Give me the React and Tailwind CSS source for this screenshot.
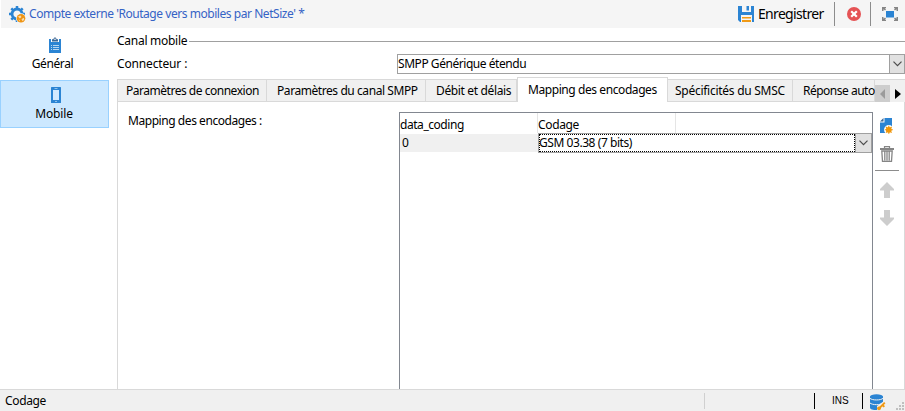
import React from 'react';

const Chevron = () => (
  <svg width="9" height="6" viewBox="0 0 9 6" fill="none" stroke="#4c4c4c" strokeWidth="1.2">
    <path d="M0.5 0.7 4.5 4.7 8.5 0.7" />
  </svg>
);

const GearIcon = () => (
  <svg width="17" height="17" viewBox="0 0 17 17">
    <circle cx="8" cy="8" r="5" fill="none" stroke="#2b84d3" strokeWidth="2.8" />
    <path d="M8 0v3M8 13v3M0 8h3M13 8h3M2.300 2.300l2 2M13.700 2.300l-2 2M2.300 13.700l2-2" stroke="#2b84d3" strokeWidth="2.500" />
    <circle cx="12" cy="12.300" r="5" fill="#f5f5f5" />
    <circle cx="12" cy="12.300" r="4.300" fill="#ee9413" />
    <path d="M9 10.500l2.500-1 1 1.600-1.600 1.300zM12.500 13.200l2.200-1.400.6 1.600-1.600 1.800zM9.300 13.500l1.500.6.2 1.500z" fill="#fbdcae" />
  </svg>
);

const SaveIcon = () => (
  <svg width="16" height="16" viewBox="0 0 16 16">
    <path d="M0 0h16v16H2l-2-2z" fill="#2b84d3" />
    <path d="M4 0h9v6H4zM3 9h11v7H3z" fill="#f5f5f5" />
    <path d="M8.5 0H11v4.5H8.5z" fill="#2b84d3" />
    <path d="M4 11h9v1.4H4zM4 14h9v2H4z" fill="#f09a16" />
  </svg>
);

const CloseIcon = () => (
  <svg width="14" height="14" viewBox="0 0 14 14">
    <circle cx="7" cy="7" r="7" fill="#e55355" />
    <path d="M4.2 4.2l5.6 5.6M9.8 4.2L4.2 9.8" stroke="#fff" strokeWidth="2.2" />
  </svg>
);

const FitIcon = () => (
  <svg width="16" height="14" viewBox="0 0 16 14">
    <path d="M4 4h8v6.500H4z" fill="#2b84d3" />
    <path d="M0 0h4v1.2H2.8L4 2.5l-1 1-1.5-1.3V4H0zM16 0h-4v1.2h1.2L12 2.5l1 1 1.5-1.3V4H16zM0 14h4v-1.2H2.8L4 11.5l-1-1-1.5 1.3V10H0zM16 14h-4v-1.2h1.2L12 11.5l1-1 1.5 1.3V10H16z" fill="#858585" />
  </svg>
);

const ClipboardIcon = () => (
  <svg width="12" height="16" viewBox="0 0 12 16">
    <path d="M0 2h12v14H0z" fill="#2b84d3" />
    <path d="M2 2h8v3H2z" fill="#fff" />
    <path d="M3 4.5V2.2h1.5C4.5 0 7.500 0 7.500 2.200H9v2.300z" fill="#3c6896" />
    <circle cx="6" cy="2.200" r="0.800" fill="#fff" />
    <path d="M2 8h1v1H2zM4 8h6v1H4zM2 10h1v1H2zM4 10h6v1H4zM2 12h1v1H2zM4 12h6v1H4z" fill="#b7d5ef" />
  </svg>
);

const PhoneIcon = () => (
  <svg width="10" height="16" viewBox="0 0 10 16">
    <rect width="10" height="16" rx="0.5" fill="#2b84d3" />
    <path d="M2 3h6v10H2z" fill="#d3eaff" />
    <path d="M3.500 1h3v1h-3zM4 14h2v1H4z" fill="#8fc0ea" />
  </svg>
);

const NewIcon = () => (
  <svg width="13" height="16" viewBox="0 0 13 16">
    <path d="M4.500 0H12v15H0V4.500h4.500z" fill="#2b84d3" />
    <path d="M3.500 0v3.500H0z" fill="#3c6896" />
    <circle cx="8.800" cy="11.800" r="4.800" fill="#fff" />
    <circle cx="8.800" cy="11.800" r="2.900" fill="#f09609" />
    <path d="M8.800 7.800v8M4.800 11.800h8M6 9l5.600 5.600M11.600 9L6 14.600" stroke="#f09609" strokeWidth="1.100" />
  </svg>
);

const TrashIcon = () => (
  <svg width="14" height="16" viewBox="0 0 14 16" fill="none" stroke="#858585">
    <path d="M0 3h14" strokeWidth="2" />
    <path d="M4.500 2.500V.600h5v1.900" strokeWidth="1.200" />
    <path d="M1.800 5l.7 10.300h9L12.200 5zM4.800 5.500v9M7 5.500v9M9.200 5.500v9" strokeWidth="1.300" />
  </svg>
);

const ArrowIcon = ({ down }) => (
  <svg width="14" height="16" viewBox="0 0 14 16" className={down ? 'rotate-180' : ''}>
    <path d="M7 0l7 7v1.500h-4V16H4V8.500H0V7z" fill="#cdcdcd" />
  </svg>
);

const DatabaseIcon = () => (
  <svg width="17" height="17" viewBox="0 0 17 17">
    <path d="M0 2.600v10.800C0 17 13 17 13 13.400V2.600z" fill="#2b84d3" />
    <ellipse cx="6.500" cy="2.600" rx="6.500" ry="2.400" fill="#2b84d3" />
    <path d="M0 4.300c2 2.200 11 2.200 13 0M0 9c2 2.200 11 2.200 13 0" fill="none" stroke="#f0f0f0" strokeWidth="1" />
    <path d="M7 12l7-5 3 2-1 8H7z" fill="#f0f0f0" />
    <path d="M9 14.500L14.800 8.700M12.500 11l1.800 1.800" stroke="#f09a16" strokeWidth="1.900" />
    <circle cx="9" cy="14.300" r="1.900" fill="#f09a16" />
  </svg>
);

const Grip = () => (
  <svg width="9" height="9" viewBox="0 0 9 9" fill="#bfbfbf">
    <path d="M6 0h2v2H6zM3 3h2v2H3zM6 3h2v2H6zM0 6h2v2H0zM3 6h2v2H3zM6 6h2v2H6z" />
  </svg>
);

const tabs = [
  { label: 'Paramètres de connexion', size: 'w-[150px] pl-[8px] border-l', tracking: 'tracking-[-0.48px]' },
  { label: 'Paramètres du canal SMPP', size: 'w-[159px] pl-[10px]', tracking: 'tracking-[-0.43px]' },
  { label: 'Débit et délais', size: 'w-[91px] pl-[10px]', tracking: 'tracking-[-0.35px]' },
  { label: 'Mapping des encodages', size: 'w-[151px] pl-[10px]', tracking: 'tracking-[-0.42px]', active: true },
  { label: 'Spécificités du SMSC', size: 'w-[125px] pl-[7px]', tracking: 'tracking-[-0.27px]' },
  { label: 'Réponse auto', size: 'w-[82px] pl-[10px]', tracking: 'tracking-[-0.5px]' },
];

function Tab({ label, size, tracking, active }) {
  return (
    <div
      className={`flex shrink-0 items-center whitespace-nowrap ${size} ${tracking} ${
        active
          ? 'h-[25px] border-x border-t border-[#d9d9d9] bg-white'
          : 'h-[23px] border-y border-r border-[#d9d9d9] bg-[#f0f0f0] last:border-r-0'
      }`}
    >
      {label}
    </div>
  );
}

function Header() {
  return (
    <header className="ml-px flex h-7 shrink-0 items-center bg-[#f5f5f5]">
      <div className="ml-2 flex w-5"><GearIcon /></div>
      <span className="flex-1 whitespace-nowrap tracking-[-0.45px] text-[#3563c5]">
        Compte externe 'Routage vers mobiles par NetSize' *
      </span>
      <SaveIcon />
      <span className="ml-1 w-[76px] whitespace-nowrap text-[14px] tracking-[-0.68px]">Enregistrer</span>
      <div className="h-6 w-px bg-[#8c8c8c]" />
      <div className="ml-3 mr-[9px]"><CloseIcon /></div>
      <div className="h-6 w-px bg-[#8c8c8c]" />
      <div className="ml-[11px] mr-[7px]"><FitIcon /></div>
    </header>
  );
}

function Sidebar() {
  return (
    <nav className="w-[109px] shrink-0">
      <div className="flex h-[52px] flex-col items-center pt-[9px] pr-[5px]">
        <div className="pl-[6px]"><ClipboardIcon /></div>
        <span className="pt-px pl-px leading-5 tracking-[-0.4px]">Général</span>
      </div>
      <div className="flex h-12 flex-col items-center border border-[#99d1ff] bg-[#cce8ff] pt-[6px]">
        <div className="pl-[3px]"><PhoneIcon /></div>
        <span className="pt-px pr-px leading-5 tracking-[-0.15px]">Mobile</span>
      </div>
    </nav>
  );
}

function EncodingTable() {
  return (
    <div className="h-[277px] w-[474px] shrink-0 border-x border-t border-[#828790]">
      <div className="flex h-5 items-center">
        <span className="flex h-full w-[138px] items-center border-r border-[#e5e5e5] pt-[3px] tracking-[-0.45px]">data_coding</span>
        <span className="flex h-full w-[138px] items-center border-r border-[#e5e5e5] pt-[3px] tracking-[-0.35px]">Codage</span>
      </div>
      <div className="flex h-5">
        <div className="my-px flex w-[138px] items-center bg-[#f0f0f0] pl-[2px]">0</div>
        <div className="flex flex-1 border border-[#a0a0a0]">
          <div className="flex flex-1 items-center border border-dotted border-black">
            <span className="-ml-px tracking-[-0.44px]">GSM 03.38 (7 bits)</span>
          </div>
          <div className="flex w-4 items-center justify-center border-l border-[#a0a0a0] bg-[#e1e1e1]"><Chevron /></div>
        </div>
      </div>
    </div>
  );
}

function TabStrip() {
  return (
    <div className="flex h-[25px] items-end">
      {tabs.map((tab) => <Tab key={tab.label} {...tab} />)}
      <div className="flex h-[23px] flex-1 items-end border-t border-[#d9d9d9] bg-[#f0f0f0]">
        <div className="flex h-[17px] w-[15px] items-center justify-center bg-[#cdcdcd]">
          <svg width="5" height="10" viewBox="0 0 5 10"><path d="M5 0v10L0 5z" fill="#9b9b9b" /></svg>
        </div>
        <div className="flex h-[17px] w-[15px] items-center justify-center bg-[#f0f0f0] pl-px">
          <svg width="6" height="10" viewBox="0 0 6 10"><path d="M0 0v10l6-5z" fill="#000" /></svg>
        </div>
      </div>
    </div>
  );
}

function StatusBar() {
  return (
    <footer className="flex h-[22px] shrink-0 items-center border-t border-[#d9d9d9] bg-[#f0f0f0]">
      <span className="w-[704px] shrink-0 pl-[5px] pt-px tracking-[-0.35px]">Codage</span>
      <div className="h-4 w-px shrink-0 bg-[#d0d0d0]" />
      <div className="ml-[109px] mt-px h-4 w-px shrink-0 bg-black" />
      <span className="w-[47px] shrink-0 pl-[17px] font-['Liberation_Sans',sans-serif] text-[10px]">INS</span>
      <div className="mt-px h-4 w-px shrink-0 bg-black" />
      <div className="ml-[7px] mt-[3px] shrink-0"><DatabaseIcon /></div>
      <div className="ml-[9px] shrink-0 self-end"><Grip /></div>
    </footer>
  );
}

export default function App() {
  return (
    <div className="flex h-[411px] w-[905px] flex-col overflow-hidden bg-white font-['Noto_Sans','Open_Sans',sans-serif] text-[12px] leading-4 text-black">
      <Header />
      <div className="flex h-[361px] shrink-0">
        <Sidebar />
        <main className="ml-2 flex w-[788px] flex-col">
          <div className="flex h-[26px] items-center">
            <span className="w-[72px] whitespace-nowrap tracking-[-0.27px]">Canal mobile</span>
            <div className="h-px flex-1 bg-[#a0a0a0]" />
          </div>
          <div className="flex h-5 items-center">
            <span className="w-[280px] tracking-[-0.15px]">Connecteur :</span>
            <div className="flex h-5 flex-1 border border-[#a0a0a0]">
              <span className="flex flex-1 items-center tracking-[-0.45px]">SMPP Générique étendu</span>
              <div className="flex w-[15px] items-center justify-center border-l border-[#a0a0a0] bg-[#e1e1e1]"><Chevron /></div>
            </div>
          </div>
          <div className="mt-[3px]"><TabStrip /></div>
          <section className="flex flex-1 border-x border-[#d9d9d9] pt-[10px]">
            <span className="w-[281px] pt-px pl-[10px] tracking-[-0.44px]">Mapping des encodages :</span>
            <EncodingTable />
            <div className="ml-[2px] flex w-6 flex-col items-center pt-[6px]">
              <div className="pr-[2px]"><NewIcon /></div>
              <div className="mt-3"><TrashIcon /></div>
              <div className="mt-2 h-px w-full bg-[#8c8c8c]" />
              <div className="mt-[11px]"><ArrowIcon /></div>
              <div className="mt-3"><ArrowIcon down /></div>
            </div>
          </section>
        </main>
      </div>
      <StatusBar />
    </div>
  );
}
